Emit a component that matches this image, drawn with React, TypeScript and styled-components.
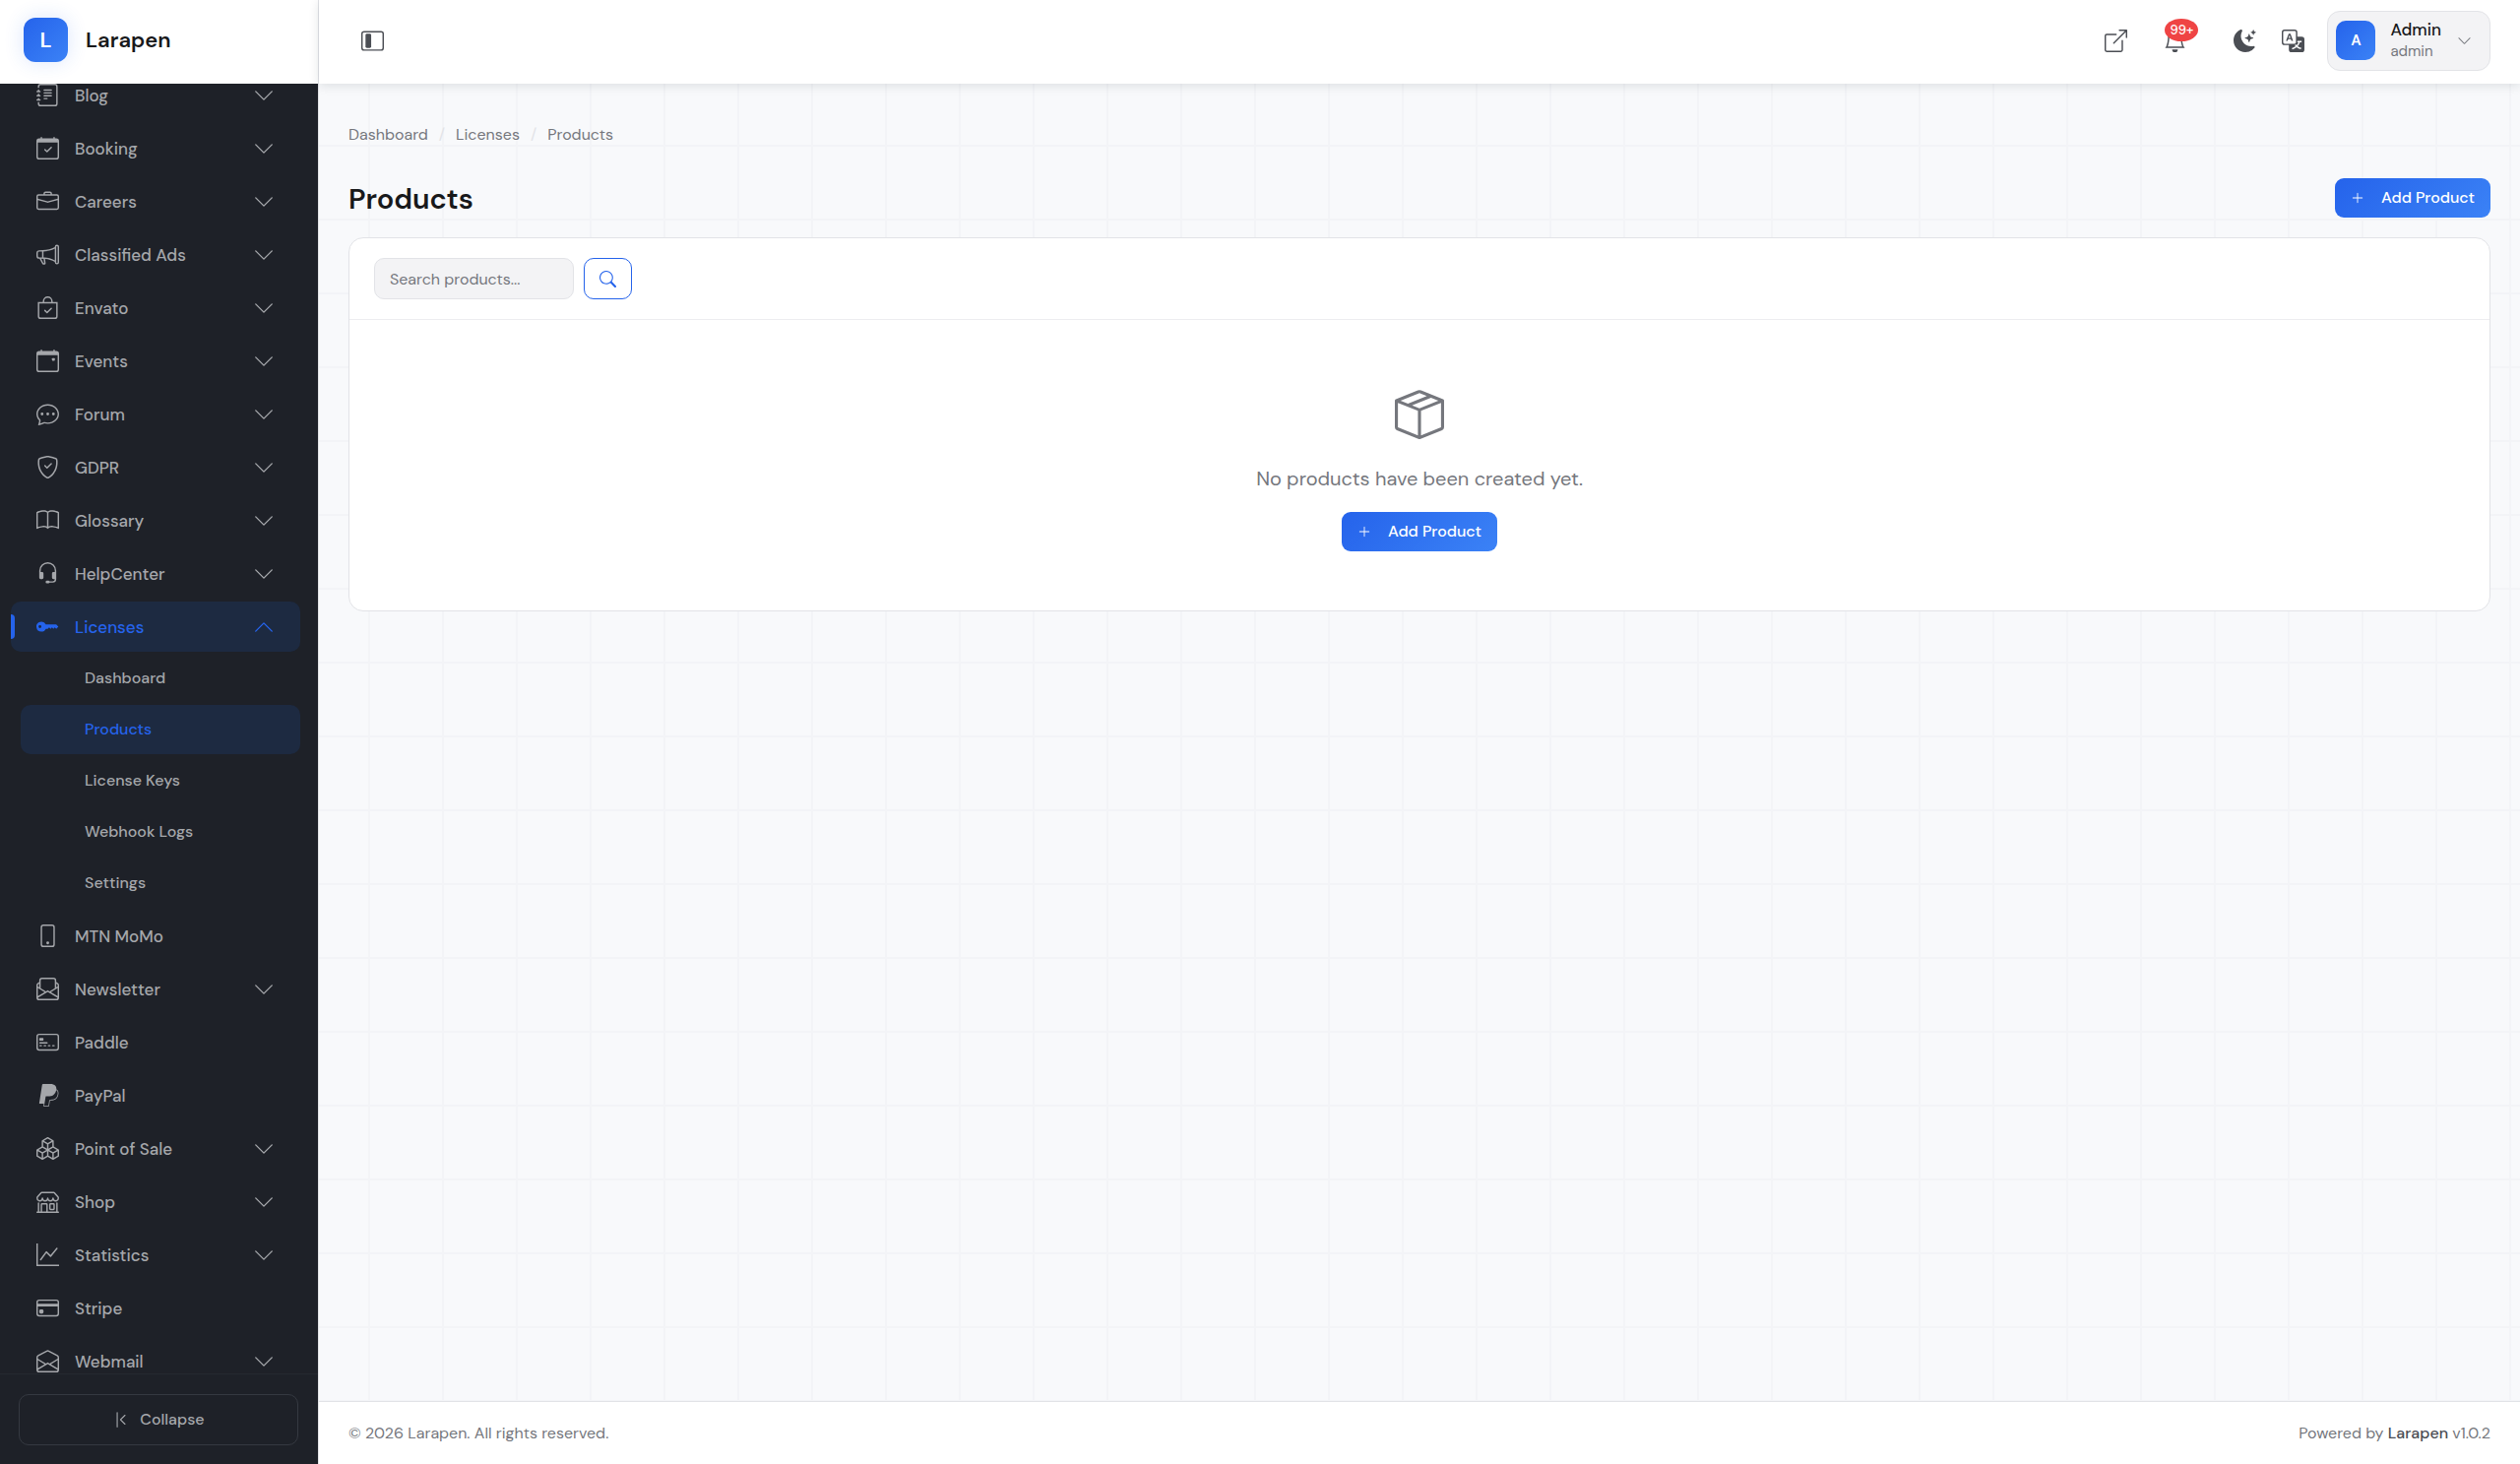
import React from "react";
import styled, { createGlobalStyle, css } from "styled-components";
import type { IconType } from "react-icons";
import {
  BsBagCheck,
  BsBell,
  BsBook,
  BsBoxArrowUpRight,
  BsBoxes,
  BsBoxSeam,
  BsBriefcase,
  BsCalendarCheck,
  BsCalendarEvent,
  BsChatDots,
  BsChevronBarLeft,
  BsChevronDown,
  BsChevronUp,
  BsCreditCard,
  BsCreditCard2Front,
  BsEnvelopeOpen,
  BsEnvelopePaper,
  BsGraphUp,
  BsHeadset,
  BsJournalText,
  BsKeyFill,
  BsLayoutSidebarInset,
  BsMegaphone,
  BsMoonStarsFill,
  BsPaypal,
  BsPhone,
  BsPlusLg,
  BsSearch,
  BsShieldCheck,
  BsShop,
  BsTranslate,
} from "react-icons/bs";

const color = {
  ink: "#18191b",
  body: "#4b4e54",
  muted: "#75777d",
  line: "#e2e3e7",
  soft: "#f3f3f5",
  page: "#f8f9fb",
  grid: "#f3f4f7",
  primary: "#2563eb",
  primaryLight: "#3b82f6",
  side: "#1e2128",
  sideText: "#a5a7ab",
  sideActive: "#1d2a41",
  danger: "#ef4444",
};

const gradient = `linear-gradient(135deg, ${color.primary}, ${color.primaryLight})`;

const GlobalStyle = createGlobalStyle`
  *, *::before, *::after { box-sizing: border-box; }
  body {
    margin: 0;
    background: ${color.page};
    color: ${color.ink};
    font-family: "DM Sans", Inter, "Liberation Sans", sans-serif;
    font-size: 16px;
    line-height: 24px;
  }
  button, input { font: inherit; }
  button { cursor: pointer; }
  a { color: inherit; text-decoration: none; }
  svg { display: block; flex: none; }
`;

const Shell = styled.div`
  display: flex;
  min-height: 100vh;
`;

const Sidebar = styled.aside`
  position: sticky;
  top: 0;
  flex: none;
  display: flex;
  flex-direction: column;
  width: 324px;
  height: 100vh;
  background: ${color.side};
  border-right: 1px solid ${color.line};
`;

const Brand = styled.a`
  flex: none;
  display: flex;
  align-items: center;
  gap: 18px;
  height: 85px;
  padding: 0 24px 4px;
  background: #fff;
  color: ${color.ink};
  font-size: 22px;
  font-weight: 600;
`;

const BrandMark = styled.span`
  display: grid;
  place-items: center;
  width: 45px;
  height: 45px;
  border-radius: 12px;
  background: ${gradient};
  box-shadow: 0 0 20px rgba(37, 99, 235, 0.16);
  color: #fff;
`;

const NavScroll = styled.nav`
  flex: 1;
  min-height: 0;
  overflow: hidden;
`;

const NavList = styled.ul`
  display: flex;
  flex-direction: column;
  gap: 3px;
  margin: -14px 0 0;
  padding: 0 18px 0 11px;
  list-style: none;
`;

const itemReset = css`
  display: flex;
  align-items: center;
  width: 100%;
  border: 0;
  border-radius: 10px;
  text-align: left;
  font-weight: 500;
`;

const NavItem = styled.button<{ $active?: boolean }>`
  ${itemReset}
  position: relative;
  gap: 16px;
  height: 51px;
  padding: 0 26px;
  overflow: hidden;
  background: ${(p) => (p.$active ? color.sideActive : "transparent")};
  color: ${(p) => (p.$active ? color.primary : color.sideText)};
  font-size: 17px;

  &::before {
    content: "";
    display: ${(p) => (p.$active ? "block" : "none")};
    position: absolute;
    left: 0;
    top: 13px;
    width: 4px;
    height: 25px;
    border-radius: 0 4px 4px 0;
    background: ${color.primary};
  }
`;

const NavLabel = styled.span`
  flex: 1;
`;

const SubList = styled.ul`
  display: flex;
  flex-direction: column;
  gap: 2px;
  margin: 2px 0 0;
  padding: 0 0 0 10px;
  list-style: none;
`;

const SubItem = styled.a<{ $active?: boolean }>`
  ${itemReset}
  height: 50px;
  padding: 0 65px;
  background: ${(p) => (p.$active ? color.sideActive : "transparent")};
  color: ${(p) => (p.$active ? color.primary : color.sideText)};
  font-size: 16px;
`;

const SideFoot = styled.div`
  flex: none;
  padding: 20px 20px 19px 19px;
  border-top: 1px solid #252930;
`;

const CollapseButton = styled.button`
  display: flex;
  align-items: center;
  justify-content: center;
  gap: 10px;
  width: 100%;
  height: 52px;
  border: 1px solid #353941;
  border-radius: 10px;
  background: transparent;
  color: ${color.sideText};
  font-size: 16px;
  font-weight: 500;
`;

const Column = styled.div`
  flex: 1;
  min-width: 0;
  display: flex;
  flex-direction: column;
`;

const Topbar = styled.header`
  position: relative;
  flex: none;
  display: flex;
  align-items: center;
  height: 85px;
  padding: 0 30px 3px;
  background: #fff;
  box-shadow: 0 2px 10px rgba(20, 30, 40, 0.12);
`;

const IconButton = styled.button`
  display: grid;
  place-items: center;
  width: 49px;
  height: 49px;
  padding: 0;
  border: 0;
  background: transparent;
  color: ${color.body};
`;

const Tools = styled.div`
  display: flex;
  align-items: center;
  margin-left: auto;
`;

const BellButton = styled(IconButton)`
  position: relative;
  margin: 0 22px 0 11px;
`;

const Badge = styled.span`
  position: absolute;
  top: 2px;
  left: 14px;
  width: 34px;
  height: 23px;
  border-radius: 50%;
  background: ${color.danger};
  color: #fff;
  font-size: 13px;
  font-weight: 500;
  line-height: 23px;
  text-align: center;
`;

const UserButton = styled.button`
  display: flex;
  align-items: center;
  height: 61px;
  margin-left: 10px;
  padding: 0 18px 0 8px;
  border: 1px solid ${color.line};
  border-radius: 13px;
  background: ${color.soft};
  text-align: left;
  color: ${color.muted};
`;

const Avatar = styled.span`
  display: grid;
  place-items: center;
  width: 40px;
  height: 40px;
  margin-right: 15px;
  border-radius: 10px;
  background: ${gradient};
  color: #fff;
  font-size: 15px;
  font-weight: 600;
`;

const UserText = styled.span`
  display: flex;
  flex-direction: column;
  margin-right: 16px;
  font-size: 15px;
  line-height: 22px;
`;

const UserName = styled.span`
  color: ${color.ink};
  font-size: 17px;
  font-weight: 500;
`;

const Main = styled.main`
  flex: 1;
  padding: 40px 30px;
  background-color: ${color.page};
  background-image: linear-gradient(${color.grid} 2px, transparent 2px),
    linear-gradient(90deg, ${color.grid} 2px, transparent 2px);
  background-size: 75px 75px;
  background-position: 50px 62px;
`;

const Crumbs = styled.ol`
  display: flex;
  margin: 0;
  padding: 0;
  list-style: none;
  color: ${color.muted};
  font-size: 16px;
  line-height: 24px;

  li + li::before {
    content: "/";
    padding: 0 11px;
    color: ${color.line};
  }
`;

const PageHead = styled.div`
  display: flex;
  align-items: center;
  justify-content: space-between;
  margin: 32px 0 20px;
`;

const Title = styled.h1`
  margin: 0;
  padding-top: 2px;
  font-size: 29px;
  font-weight: 600;
  line-height: 38px;
`;

const PrimaryButton = styled.button`
  display: flex;
  align-items: center;
  gap: 17px;
  height: 40px;
  padding: 0 16px;
  border: 0;
  border-radius: 9px;
  background: ${gradient};
  color: #fff;
  font-size: 16px;
  font-weight: 500;
`;

const Card = styled.section`
  border: 1px solid ${color.line};
  border-radius: 15px;
  background: #fff;
`;

const SearchForm = styled.form`
  display: flex;
  gap: 10px;
  padding: 20px 25px;
  border-bottom: 1px solid #ededf0;
`;

const SearchInput = styled.input`
  width: 203px;
  height: 42px;
  padding: 0 15px;
  border: 1px solid ${color.line};
  border-radius: 10px;
  background: ${color.soft};
  color: ${color.ink};
  font-size: 16px;

  &::placeholder {
    color: ${color.muted};
    opacity: 1;
  }
`;

const SearchButton = styled.button`
  display: grid;
  place-items: center;
  width: 49px;
  height: 42px;
  padding: 0;
  border: 1px solid ${color.primary};
  border-radius: 10px;
  background: #fff;
  color: ${color.primary};
`;

const Empty = styled.div`
  display: flex;
  flex-direction: column;
  align-items: center;
  padding: 71px 20px 60px;
  color: ${color.muted};
`;

const EmptyText = styled.p`
  margin: 25px 0 19px;
  font-size: 20px;
  line-height: 30px;
`;

const Footer = styled.footer`
  flex: none;
  display: flex;
  align-items: center;
  justify-content: space-between;
  height: 64px;
  padding: 0 30px;
  border-top: 1px solid ${color.line};
  background: #fff;
  color: ${color.muted};
  font-size: 16px;

  a {
    color: ${color.body};
    font-weight: 500;
  }
`;

interface NavEntry {
  label: string;
  icon: IconType;
  leaf?: boolean;
  children?: string[];
}

const navigation: NavEntry[] = [
  { label: "Blog", icon: BsJournalText },
  { label: "Booking", icon: BsCalendarCheck },
  { label: "Careers", icon: BsBriefcase },
  { label: "Classified Ads", icon: BsMegaphone },
  { label: "Envato", icon: BsBagCheck },
  { label: "Events", icon: BsCalendarEvent },
  { label: "Forum", icon: BsChatDots },
  { label: "GDPR", icon: BsShieldCheck },
  { label: "Glossary", icon: BsBook },
  { label: "HelpCenter", icon: BsHeadset },
  {
    label: "Licenses",
    icon: BsKeyFill,
    children: ["Dashboard", "Products", "License Keys", "Webhook Logs", "Settings"],
  },
  { label: "MTN MoMo", icon: BsPhone, leaf: true },
  { label: "Newsletter", icon: BsEnvelopePaper },
  { label: "Paddle", icon: BsCreditCard2Front, leaf: true },
  { label: "PayPal", icon: BsPaypal, leaf: true },
  { label: "Point of Sale", icon: BsBoxes },
  { label: "Shop", icon: BsShop },
  { label: "Statistics", icon: BsGraphUp },
  { label: "Stripe", icon: BsCreditCard, leaf: true },
  { label: "Webmail", icon: BsEnvelopeOpen },
];

function NavRow({ label, icon: Icon, leaf, children }: NavEntry) {
  const open = Boolean(children);
  const Chevron = open ? BsChevronUp : BsChevronDown;
  return (
    <li>
      <NavItem type="button" $active={open} aria-expanded={leaf ? undefined : open}>
        <Icon size={23} />
        <NavLabel>{label}</NavLabel>
        {!leaf && <Chevron size={22} />}
      </NavItem>
      {children && (
        <SubList>
          {children.map((child) => (
            <li key={child}>
              <SubItem href="#" $active={child === "Products"}>
                {child}
              </SubItem>
            </li>
          ))}
        </SubList>
      )}
    </li>
  );
}

function AddProduct() {
  return (
    <PrimaryButton type="button">
      <BsPlusLg size={14} />
      Add Product
    </PrimaryButton>
  );
}

export default function App() {
  return (
    <>
      <GlobalStyle />
      <Shell>
        <Sidebar>
          <Brand href="#">
            <BrandMark>L</BrandMark>
            Larapen
          </Brand>
          <NavScroll aria-label="Main">
            <NavList>
              {navigation.map((entry) => (
                <NavRow key={entry.label} {...entry} />
              ))}
            </NavList>
          </NavScroll>
          <SideFoot>
            <CollapseButton type="button">
              <BsChevronBarLeft size={18} />
              Collapse
            </CollapseButton>
          </SideFoot>
        </Sidebar>
        <Column>
          <Topbar>
            <IconButton type="button" aria-label="Toggle sidebar">
              <BsLayoutSidebarInset size={23} />
            </IconButton>
            <Tools>
              <IconButton type="button" aria-label="Open site">
                <BsBoxArrowUpRight size={23} />
              </IconButton>
              <BellButton type="button" aria-label="Notifications">
                <BsBell size={23} />
                <Badge>99+</Badge>
              </BellButton>
              <IconButton type="button" aria-label="Dark mode">
                <BsMoonStarsFill size={23} />
              </IconButton>
              <IconButton type="button" aria-label="Language">
                <BsTranslate size={23} />
              </IconButton>
              <UserButton type="button">
                <Avatar>A</Avatar>
                <UserText>
                  <UserName>Admin</UserName>
                  admin
                </UserText>
                <BsChevronDown size={15} />
              </UserButton>
            </Tools>
          </Topbar>
          <Main>
            <nav aria-label="Breadcrumb">
              <Crumbs>
                <li>
                  <a href="#">Dashboard</a>
                </li>
                <li>
                  <a href="#">Licenses</a>
                </li>
                <li aria-current="page">Products</li>
              </Crumbs>
            </nav>
            <PageHead>
              <Title>Products</Title>
              <AddProduct />
            </PageHead>
            <Card>
              <SearchForm onSubmit={(e) => e.preventDefault()}>
                <SearchInput type="text" placeholder="Search products..." aria-label="Search products" />
                <SearchButton type="submit" aria-label="Search">
                  <BsSearch size={17} />
                </SearchButton>
              </SearchForm>
              <Empty>
                <BsBoxSeam size={50} />
                <EmptyText>No products have been created yet.</EmptyText>
                <AddProduct />
              </Empty>
            </Card>
          </Main>
          <Footer>
            <span>© 2026 Larapen. All rights reserved.</span>
            <span>
              Powered by <a href="#">Larapen</a> v1.0.2
            </span>
          </Footer>
        </Column>
      </Shell>
    </>
  );
}
